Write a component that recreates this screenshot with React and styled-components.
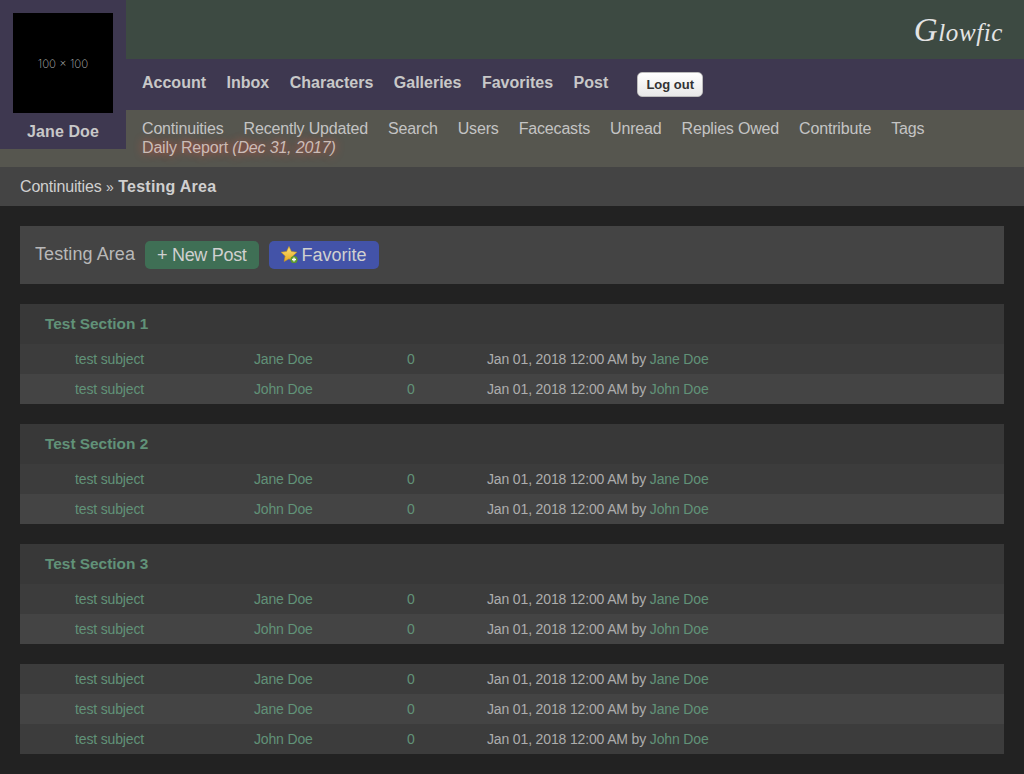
import React from "react";
import styled, { createGlobalStyle } from "styled-components";

const Global = createGlobalStyle`
  html, body { margin: 0; padding: 0; background: #222222; }
  body { font-family: "Liberation Sans", Arial, sans-serif; color: #c4c4c4; font-size: 14px; }
  a { text-decoration: none; color: inherit; }
`;

const UserBox = styled.div`
  float: left;
  position: relative;
  z-index: 1;
  width: 126px;
  height: 149px;
  background: #3e3850;
  display: flex;
  flex-direction: column;
  align-items: center;
  padding-top: 13px;
  box-sizing: border-box;
`;
const Avatar = styled.div`
  width: 100px;
  height: 100px;
  background: #000;
  color: #b8b8b8;
  display: flex;
  align-items: center;
  justify-content: center;
  box-sizing: border-box;
  padding-top: 2px;
  font-family: "Inter", sans-serif;
  font-weight: 200;
  font-size: 11.5px;
`;
const UserName = styled.div`
  margin-top: 10px;
  font-size: 16px;
  line-height: 18px;
  font-weight: bold;
  letter-spacing: 0.1px;
  color: #c8c8c8;
`;
const LogoBar = styled.div`
  height: 59px;
  background: #3d4a42;
  display: flex;
  justify-content: flex-end;
  align-items: center;
  padding-right: 21px;
`;
const Logo = styled.div`
  font-family: "Liberation Serif", serif;
  font-style: italic;
  font-size: 25px;
  letter-spacing: 0.6px;
  color: #e4e4e4;
  margin-top: 2px;
  &::first-letter {
    font-size: 33px;
  }
`;
const MainNav = styled.nav`
  height: 51px;
  background: #3e3850;
  display: flex;
  align-items: center;
  padding-left: 16px;
  gap: 20.5px;
`;
const MainLink = styled.a`
  font-size: 16px;
  font-weight: bold;
  color: #c8c8c8;
  margin-top: -4px;
`;
const LogOut = styled.button`
  margin-left: 8.5px;
  height: 25px;
  width: 66px;
  padding: 0;
  border: 1px solid #bbbbbb;
  border-radius: 5px;
  background: linear-gradient(#ffffff, #e8e8e8);
  color: #333333;
  font: bold 13px "Liberation Sans", Arial, sans-serif;
`;
const SubNav = styled.nav`
  height: 57px;
  background: #56564f;
  box-sizing: border-box;
  padding: 10px 0 0 142px;
  font-size: 16px;
  line-height: 18px;
  letter-spacing: -0.17px;
  color: #c4c4c4;
`;
const SubLinks = styled.div`
  display: flex;
  gap: 20px;
`;
const DailyReport = styled.a`
  display: block;
  margin-top: 1px;
  color: #cbbcb7;
  text-shadow: 0 0 8px #d9503f;
  & i { font-style: italic; }
`;
const Crumbs = styled.div`
  clear: both;
  height: 39px;
  background: #444444;
  box-sizing: border-box;
  padding-left: 20px;
  display: flex;
  align-items: center;
  font-size: 16px;
  letter-spacing: -0.17px;
  color: #d0d0d0;
`;
const Sep = styled.span`
  margin: 0 4.5px;
  font-size: 14px;
`;
const CrumbCurrent = styled.b`
  letter-spacing: 0.25px;
`;
const Content = styled.main`
  padding: 20px;
  display: flex;
  flex-direction: column;
  gap: 20px;
`;
const TitleBar = styled.div`
  height: 58px;
  background: #444444;
  box-sizing: border-box;
  padding: 15px 0 0 15px;
  display: flex;
  align-items: flex-start;
  gap: 10px;
`;
const BoardTitle = styled.h1`
  margin: 0;
  font-size: 18px;
  line-height: 26px;
  font-weight: normal;
  letter-spacing: 0.08px;
  color: #b8b8b8;
`;
const ActionButton = styled.a`
  height: 28px;
  border-radius: 5px;
  background: ${(p) => p.$bg};
  color: #d0d0d0;
  font-size: 18px;
  line-height: 28px;
  padding: 0 12px;
  letter-spacing: ${(p) => p.$tight || "0"};
  display: flex;
  align-items: center;
  gap: 3px;
`;
const Section = styled.section``;
const SectionHead = styled.div`
  height: 40px;
  background: #383838;
  padding-left: 25px;
  display: flex;
  align-items: center;
  font-size: 15.4px;
  font-weight: bold;
  color: #619278;
`;
const Row = styled.div`
  height: 30px;
  background: ${(p) => (p.$alt ? "#444444" : "#3c3c3c")};
  padding-left: 55px;
  display: grid;
  grid-template-columns: 179px 153px 80px 1fr;
  align-items: center;
  font-size: 14px;
  letter-spacing: -0.15px;
  color: #adadad;
`;
const GreenLink = styled.a`
  color: #619278;
`;

const StarIcon = () => (
  <svg width="18" height="18" viewBox="0 0 18 18">
    <defs>
      <linearGradient id="starFill" x1="0" y1="0" x2="0" y2="1">
        <stop offset="0" stopColor="#fbe27a" />
        <stop offset="1" stopColor="#e8a820" />
      </linearGradient>
    </defs>
    <path
      d="M8 0.5l2.4 5 5.4.7-4 3.8 1 5.4L8 12.8 3.2 15.4l1-5.4-4-3.8L5.6 5.5z"
      fill="url(#starFill)"
      stroke="#c99a1e"
      strokeWidth="0.6"
    />
    <circle cx="13" cy="13.5" r="3.6" fill="#5c9a2e" />
    <path d="M13 11.5v4M11 13.5h4" stroke="#ffffff" strokeWidth="1.3" />
  </svg>
);

const PostRow = ({ alt, author }) => (
  <Row $alt={alt}>
    <GreenLink href="#">test subject</GreenLink>
    <GreenLink href="#">{author}</GreenLink>
    <GreenLink href="#">0</GreenLink>
    <span>
      Jan 01, 2018 12:00 AM by <GreenLink href="#">{author}</GreenLink>
    </span>
  </Row>
);

const main = ["Account", "Inbox", "Characters", "Galleries", "Favorites", "Post"];
const sub = ["Continuities", "Recently Updated", "Search", "Users", "Facecasts", "Unread", "Replies Owed", "Contribute", "Tags"];
const sections = [
  { title: "Test Section 1", rows: ["Jane Doe", "John Doe"] },
  { title: "Test Section 2", rows: ["Jane Doe", "John Doe"] },
  { title: "Test Section 3", rows: ["Jane Doe", "John Doe"] },
  { rows: ["Jane Doe", "Jane Doe", "John Doe"] },
];

export default function App() {
  return (
    <>
      <Global />
      <UserBox>
        <Avatar>100 × 100</Avatar>
        <UserName>Jane Doe</UserName>
      </UserBox>
      <LogoBar>
        <Logo>Glowfic</Logo>
      </LogoBar>
      <MainNav>
        {main.map((m) => (
          <MainLink href="#" key={m}>{m}</MainLink>
        ))}
        <LogOut>Log out</LogOut>
      </MainNav>
      <SubNav>
        <SubLinks>
          {sub.map((s) => (
            <a href="#" key={s}>{s}</a>
          ))}
        </SubLinks>
        <DailyReport href="#">
          Daily Report <i>(Dec 31, 2017)</i>
        </DailyReport>
      </SubNav>
      <Crumbs>
        Continuities<Sep>»</Sep><CrumbCurrent>Testing Area</CrumbCurrent>
      </Crumbs>
      <Content>
        <TitleBar>
          <BoardTitle>Testing Area</BoardTitle>
          <ActionButton href="#" $bg="#3f6f55" $tight="-0.3px">+ New Post</ActionButton>
          <ActionButton href="#" $bg="#4353a8"><StarIcon />Favorite</ActionButton>
        </TitleBar>
        {sections.map((s, i) => (
          <Section key={i}>
            {s.title && <SectionHead>{s.title}</SectionHead>}
            {s.rows.map((a, j) => (
              <PostRow key={j} alt={j % 2 === 1} author={a} />
            ))}
          </Section>
        ))}
      </Content>
    </>
  );
}
